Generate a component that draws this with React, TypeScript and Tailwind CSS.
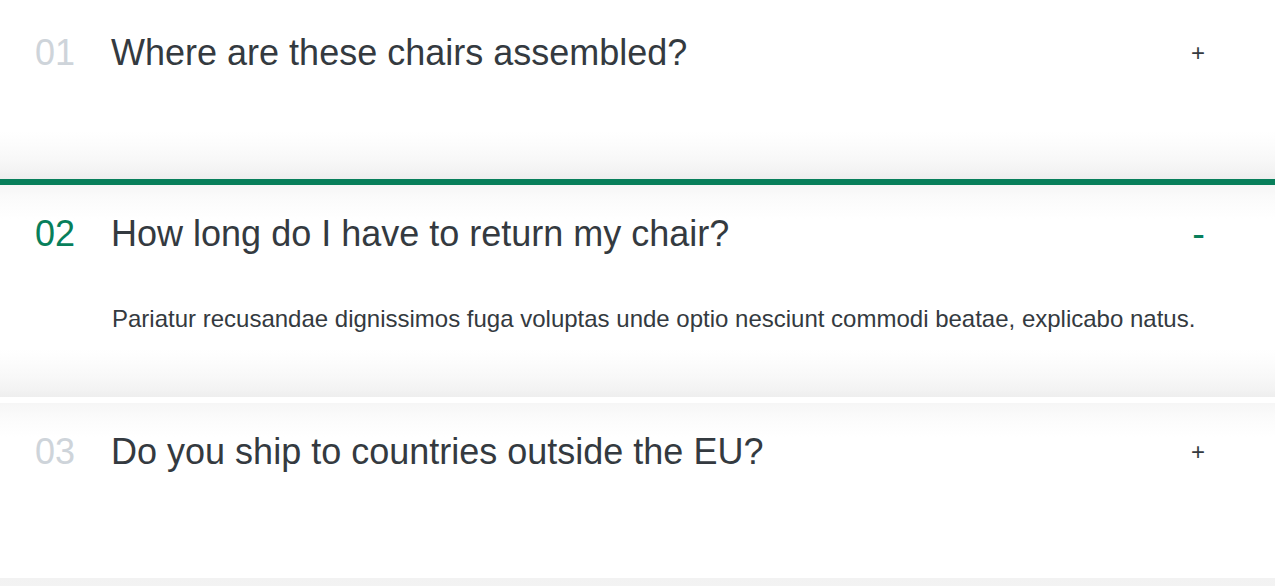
import { useState } from 'react';

const FAQS = [
  {
    num: '01',
    title: 'Where are these chairs assembled?',
    text: 'Pariatur recusandae dignissimos fuga voluptas unde optio nesciunt commodi beatae, explicabo natus.',
  },
  {
    num: '02',
    title: 'How long do I have to return my chair?',
    text: 'Pariatur recusandae dignissimos fuga voluptas unde optio nesciunt commodi beatae, explicabo natus.',
  },
  {
    num: '03',
    title: 'Do you ship to countries outside the EU?',
    text: 'Pariatur recusandae dignissimos fuga voluptas unde optio nesciunt commodi beatae, explicabo natus.',
  },
];

// shading that the neighbouring items cast on each other
const SHADE_BOTTOM =
  'bg-[linear-gradient(to_top,#eeeeee_0px,#f3f3f3_8px,#f8f8f8_20px,#fcfcfc_34px,#ffffff_48px)]';
const SHADE_TOP = 'bg-[linear-gradient(to_bottom,#f6f6f6_0px,#fbfbfb_14px,#ffffff_34px)]';
const SHADE_BOTH =
  'bg-[linear-gradient(to_bottom,#f6f6f6_0px,#fbfbfb_14px,#ffffff_34px,#ffffff_calc(100%_-_48px),#fcfcfc_calc(100%_-_34px),#f8f8f8_calc(100%_-_20px),#f3f3f3_calc(100%_-_8px),#eeeeee_100%)]';

interface ItemProps {
  num: string;
  title: string;
  text: string;
  open: boolean;
  shade: string;
  first: boolean;
  onToggle: () => void;
}

function AccordionItem({ num, title, text, open, shade, first, onToggle }: ItemProps) {
  return (
    <div
      className={`border-t-[6px] pl-[35px] pr-[70px] pt-[27px] ${open ? 'border-[#087f5b] pb-[59px]' : 'border-white pb-[104px]'} ${first ? '-mt-[2px]' : ''} ${shade}`}
    >
      <button onClick={onToggle} className="flex w-full cursor-pointer items-center text-left">
        <span
          className={`text-[36px] leading-[44px] ${open ? 'text-[#087f5b]' : 'text-[#ced4da]'}`}
        >
          {num}
        </span>
        <span className="ml-[36px] flex-1 text-[36px] leading-[44px] text-[#343a40]">{title}</span>
        {open ? (
          <span className="text-[38px] leading-[24px] text-[#087f5b]">-</span>
        ) : (
          <span className="text-[24px] leading-[24px] text-[#343a40]">+</span>
        )}
      </button>
      {open && (
        <p className="ml-[77px] mt-[44px] text-[24px] leading-[38px] text-[#343a40]">{text}</p>
      )}
    </div>
  );
}

export default function App() {
  const [openIndex, setOpenIndex] = useState<number | null>(1);

  const shadeFor = (i: number) => {
    if (openIndex === null) return '';
    if (i === openIndex) return SHADE_BOTH;
    if (i === openIndex - 1) return SHADE_BOTTOM;
    if (i === openIndex + 1) return SHADE_TOP;
    return '';
  };

  return (
    <div className="min-h-screen overflow-hidden bg-white font-['Liberation_Sans',Arial,sans-serif]">
      <div className="flex flex-col">
        {FAQS.map((faq, i) => (
          <AccordionItem
            key={faq.num}
            {...faq}
            open={openIndex === i}
            first={i === 0}
            shade={shadeFor(i)}
            onToggle={() => setOpenIndex(openIndex === i ? null : i)}
          />
        ))}
        <div className="h-[40px] bg-[linear-gradient(to_bottom,#f2f2f2,#f6f6f6)]" />
      </div>
    </div>
  );
}
